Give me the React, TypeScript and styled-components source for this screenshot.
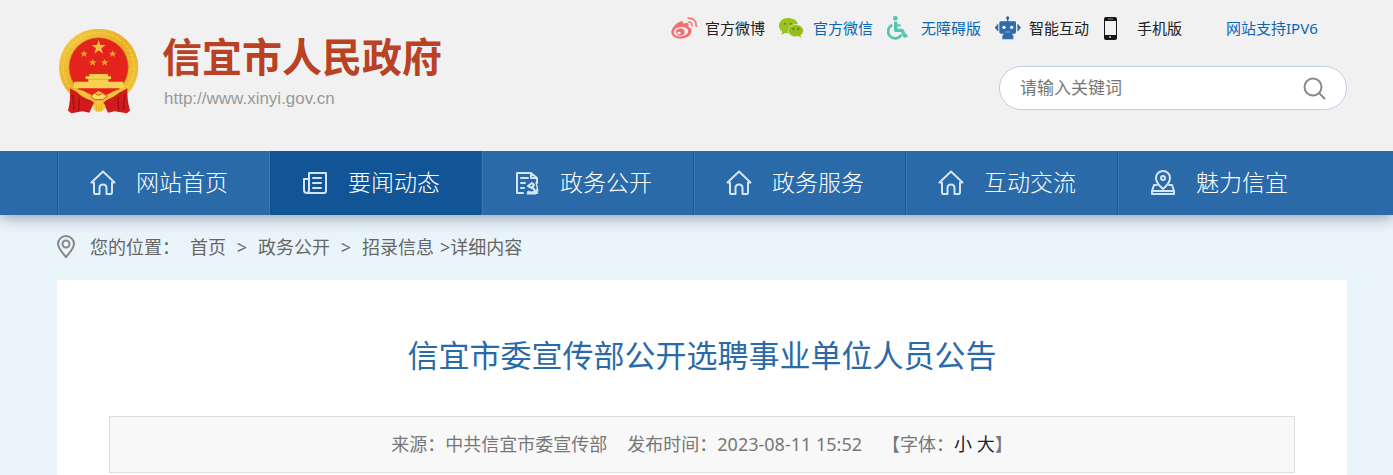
import React from "react";
import styled, { createGlobalStyle } from "styled-components";

const sans = `"Noto Sans", "Noto Sans CJK SC", sans-serif`;

const GlobalStyle = createGlobalStyle`
  * { box-sizing: border-box; }
  body { margin: 0; background: #e9f4fb; color: #333; font-family: ${sans}; }
  a { color: inherit; text-decoration: none; }
  svg { display: block; flex: none; }
`;

const gutter = "padding-left: 57px; padding-right: 46px;";

const Header = styled.header`
  ${gutter}
  display: flex;
  justify-content: space-between;
  height: 151px;
  background: #f1f1f1;
`;

const Brand = styled.a`
  display: flex;
  gap: 23px;
  padding: 29px 0 0 2px;
`;

const BrandText = styled.span`
  display: flex;
  flex-direction: column;
  gap: 6px;
`;

const BrandName = styled.strong`
  font: 700 40px/52px "Noto Sans CJK SC", sans-serif;
  color: #b94124;
  white-space: nowrap;
`;

const BrandUrl = styled.span`
  padding-left: 2px;
  font: 17px/24px "Liberation Sans", sans-serif;
  color: #999;
`;

const Tools = styled.div`
  display: flex;
  flex-direction: column;
  align-items: flex-end;
  gap: 23px;
  padding-top: 13px;
`;

const QuickLinks = styled.nav`
  display: flex;
  width: 676px;
`;

const QuickLink = styled.a<{ $blue?: boolean; $plain?: boolean }>`
  display: flex;
  align-items: center;
  width: 108px;
  height: 30px;
  margin-left: ${(p) => (p.$plain ? 15 : 0)}px;
  font-size: 15px;
  line-height: 30px;
  white-space: nowrap;
  color: ${(p) => (p.$blue ? "#0a66b5" : "#222")};
`;

const IconSlot = styled.span`
  flex: none;
  width: 34px;
`;

const Search = styled.form`
  display: flex;
  align-items: center;
  width: 348px;
  height: 44px;
  padding: 0 20px;
  border: 1px solid #bfcfe6;
  border-radius: 22px;
  background: #fff;
`;

const SearchInput = styled.input`
  flex: 1;
  min-width: 0;
  padding: 0;
  border: 0;
  outline: 0;
  background: none;
  font: 17px/24px ${sans};
  color: #333;
  &::placeholder { color: #757575; opacity: 1; }
`;

const SearchButton = styled.button`
  padding: 0;
  border: 0;
  background: none;
  cursor: pointer;
`;

const MainNav = styled.nav`
  ${gutter}
  position: relative;
  display: flex;
  height: 64px;
  background: #2a6aa8;
  box-shadow: 0 2px 14px rgba(60, 60, 70, 0.5);
  clip-path: inset(0 0 -24px 0);
`;

const NavItem = styled.a<{ $active?: boolean }>`
  display: flex;
  align-items: center;
  gap: 20px;
  width: 212px;
  padding: 0 0 2px 32px;
  border-left: 1px solid ${(p) => (p.$active ? "#3a76b0" : "#1f5c97")};
  box-shadow: ${(p) => (p.$active ? "none" : "inset 1px 0 0 #3a76b0")};
  background: ${(p) => (p.$active ? "#125596" : "transparent")};
  color: #fff;
  font-size: 23px;
  font-weight: 300;
  line-height: 32px;
  white-space: nowrap;
`;

const Crumbs = styled.nav`
  ${gutter}
  display: flex;
  align-items: center;
  height: 65px;
  padding-bottom: 2px;
  font-size: 18px;
  line-height: 28px;
  color: #666;
  white-space: nowrap;
`;

const CrumbLabel = styled.span`
  margin: 0 10px 0 15px;
`;

const CrumbSep = styled.span`
  width: 32px;
  text-align: center;
`;

const CrumbTail = styled.span`
  padding-left: 6px;
`;

const Article = styled.main`
  margin: 0 46px 0 57px;
  padding: 51px 52px 60px;
  background: #fff;
`;

const Title = styled.h1`
  margin: 0 0 37px;
  font-size: 31px;
  font-weight: 400;
  line-height: 48px;
  text-align: center;
  color: #2a6aa8;
`;

const Meta = styled.div`
  display: flex;
  justify-content: center;
  gap: 20px;
  padding: 14px 0;
  border: 1px solid #ddd;
  background: #f8f8f8;
  font-size: 18px;
  line-height: 27px;
  color: #777;
  white-space: nowrap;
`;

const SizeButton = styled.button`
  padding: 0;
  border: 0;
  background: none;
  font: inherit;
  color: #222;
  cursor: pointer;
`;

const Emblem = () => (
  <svg width="80" height="85" viewBox="27 27 240 255" aria-hidden="true">
    <defs>
      <linearGradient id="gold" x1="0" y1="0" x2="1" y2="1">
        <stop offset="0" stopColor="#f7cf45" />
        <stop offset="0.5" stopColor="#e9ae27" />
        <stop offset="1" stopColor="#f5ca3c" />
      </linearGradient>
    </defs>
    <ellipse cx="146" cy="142" rx="119" ry="116" fill="url(#gold)" />
    <ellipse cx="146" cy="142" rx="106" ry="104" fill="none" stroke="#f4cd48" strokeWidth="4" strokeDasharray="9 5" />
    <circle cx="146" cy="142" r="89" fill="#e4231d" stroke="#c98a1a" strokeWidth="2" />
    <path d="M146 60l5 15h16l-13 10 5 16-13-10-13 10 5-16-13-10h16z" fill="#f3c53a" />
    <path
      d="M102 91l3 7h8l-6 5 2 8-7-5-7 5 2-8-6-5h8zM188 91l3 7h8l-6 5 2 8-7-5-7 5 2-8-6-5h8zM128 117l3 7h8l-6 5 2 8-7-5-7 5 2-8-6-5h8zM164 117l3 7h8l-6 5 2 8-7-5-7 5 2-8-6-5h8z"
      fill="#eda62c"
    />
    <path d="M118 162h56v7h9v8h-8v8h44l4 20H69l4-20h42v-8h-8v-8h11z" fill="#f8d152" />
    <path d="M113 178h66" stroke="#e0a02a" strokeWidth="2" />
    <path d="M79 207h134l-19 20H99z" fill="#e4231d" />
    <path d="M60 205q20 14 44 19l28 24-14 30-20-4-34 6-10-8q8-30 6-67z" fill="#d01b1b" />
    <path d="M232 205q-20 14-44 19l-28 24 14 30 20-4 36 6 10-8q-9-30-8-67z" fill="#d01b1b" />
    <path d="M68 224l4 46M88 232l-2 40M224 224l-4 46M204 232l2 40" stroke="#a31014" strokeWidth="4" />
    <path d="M74 205q28 6 50 20l22-12 24 12q22-14 48-20-12 20-42 32l-28 8h-10l-26-8q-30-12-38-32z" fill="#f2c23a" />
    <path d="M122 229l12-9 12 6 12-6 14 9-14 10h-24z" fill="#f9dc62" stroke="#d7541f" strokeWidth="3" />
    <path d="M127 257l9-9 11-3 11 3 9 9-5 12-8 6h-15l-8-7z" fill="#f6cc38" />
    <path d="M138 250l3 22M147 248v26M156 250l-3 22" stroke="#dc9724" strokeWidth="2" />
  </svg>
);

const WeiboIcon = () => (
  <svg width="27" height="23" viewBox="17 19 81 69" aria-hidden="true">
    <path
      d="M44 33c6-3 11-1 10 6 8-3 17-3 16 5 0 2-1 3-1 4 6 2 10 6 10 12 0 13-15 24-34 24-16 0-27-8-27-20 0-11 13-26 26-31z"
      fill="#ee7272"
    />
    <ellipse cx="47" cy="63" rx="22" ry="14" fill="#f8eeee" transform="rotate(-8 47 63)" />
    <ellipse cx="45" cy="64" rx="13" ry="11" fill="#ee7272" transform="rotate(-15 45 64)" />
    <ellipse cx="41" cy="67" rx="5" ry="4" fill="#fff" />
    <path d="M69 34q12-1 11 12" fill="none" stroke="#f08080" strokeWidth="5" strokeLinecap="round" />
    <path d="M69 23q24-1 24 24" fill="none" stroke="#f08080" strokeWidth="6" strokeLinecap="round" />
  </svg>
);

const WechatIcon = () => (
  <svg width="25" height="20" viewBox="357 41 75 60" aria-hidden="true">
    <path d="M384 41c-16 0-27 10-27 23 0 8 4 14 10 18l-3 10 11-6q5 1 12 1c-4-17 9-29 27-28-3-11-15-18-30-18z" fill="#9ac31c" />
    <path d="M407 61c-13 0-22 8-22 18s9 18 22 18l8-1 10 5-3-9c5-3 8-8 8-13 0-10-10-18-23-18z" fill="#93be17" stroke="#dfeabb" strokeWidth="2" />
    <g fill="#5d7b14">
      <circle cx="375" cy="58" r="3" />
      <circle cx="392" cy="58" r="3" />
      <circle cx="400" cy="74" r="3" />
      <circle cx="415" cy="74" r="3" />
    </g>
  </svg>
);

const AccessIcon = () => (
  <svg width="21" height="24" viewBox="682 35 63 72" fill="none" stroke="#58c3b0" aria-hidden="true">
    <circle cx="707" cy="42" r="7" fill="#58c3b0" stroke="none" />
    <path d="M708 52v26h19l8 17 8-2" strokeWidth="10" strokeLinejoin="round" />
    <path d="M708 63h15" strokeWidth="6" />
    <path d="M698 62a21 21 0 1 0 27 29" strokeWidth="8" />
  </svg>
);

const RobotIcon = () => (
  <svg width="26" height="24" viewBox="19 35 78 72" fill="#2e6cab" aria-hidden="true">
    <circle cx="57" cy="41" r="5" />
    <path d="M55 44h4v8h-4zM36 51h42q4 0 4 4v28q0 5-5 5h-6v5h3v12H41V93h3v-5h-7q-5 0-5-5V55q0-4 4-4z" />
    <path d="M29 59v22q-5 0-6-6-4-1-4-5t4-5q1-6 6-6zM86 59v22q5 0 6-6 4-1 4-5t-4-5q-1-6-6-6z" />
    <circle cx="46" cy="69" r="5" fill="#fff" />
    <circle cx="69" cy="69" r="5" fill="#fff" />
    <path d="M50 83h15" stroke="#b7cde4" strokeWidth="2" />
  </svg>
);

const PhoneIcon = () => (
  <svg width="15" height="23" viewBox="-1 0 15 23" aria-hidden="true">
    <rect width="13" height="23" rx="2" fill="#151515" />
    <path d="M1 4h11v14H1z" fill="#f1f1f1" />
    <path d="M4 2h5" stroke="#888" />
    <circle cx="6" cy="20" r="1" fill="#ccc" />
  </svg>
);

const SearchIcon = () => (
  <svg width="24" height="24" viewBox="0 0 24 24" fill="none" stroke="#8a8a8a" strokeWidth="2" aria-hidden="true">
    <circle cx="11" cy="11" r="8.500" />
    <path d="M17 17l6 6" />
  </svg>
);

const navIcon = {
  width: 26,
  height: 26,
  viewBox: "0 0 26 26",
  fill: "none",
  stroke: "#d5e4f4",
  strokeWidth: 2,
  strokeLinejoin: "round" as const,
  strokeLinecap: "round" as const,
  "aria-hidden": true,
};

const HomeIcon = () => (
  <svg {...navIcon}>
    <path d="M1.500 13.500L13 2.500l11.500 11H22V23q0 2-1 2h-4.500v-6q0-3.500-3.500-3.500T9.500 19v6H5q-1 0-1-2v-9.500z" />
  </svg>
);

const NewsIcon = () => (
  <svg {...navIcon}>
    <path d="M7 4h17v18q0 2-2 2H5q-3 0-3-3V10h5M7 4v17q0 3-2 3M11 9h8M11 14h8M11 19h8" />
  </svg>
);

const DocIcon = () => (
  <svg {...navIcon}>
    <path d="M9 24H3V4h14l6 5v5M17 4v5h6M7 9h7M7 14h4M7 19h3" />
    <path d="M14 17l4-3 2 2-2 3-2-1zM18 18l5 6" strokeWidth="2" />
    <path d="M22 14q3 6-1 8-4 2-7 0l-1 3h9l2-3z" fill="#d5e4f4" strokeWidth="1" />
  </svg>
);

const CharmIcon = () => (
  <svg {...navIcon}>
    <path d="M13 20Q6 14 6 9a7 7 0 0 1 14 0q0 5-7 11z" />
    <circle cx="13" cy="9" r="2" />
    <path d="M7 16H4l-2 6v3h22v-3l-2-6h-3M3 22h20" />
  </svg>
);

const PlaceIcon = () => (
  <svg width="18" height="24" viewBox="0 0 18 24" fill="none" stroke="#888" strokeWidth="2" aria-hidden="true">
    <path d="M9 22Q1 13 1 9a8 8 0 0 1 16 0q0 4-8 13z" />
    <circle cx="9" cy="9" r="3.500" />
  </svg>
);

const quickLinks = [
  { text: "官方微博", icon: <WeiboIcon /> },
  { text: "官方微信", icon: <WechatIcon />, blue: true },
  { text: "无障碍版", icon: <AccessIcon />, blue: true },
  { text: "智能互动", icon: <RobotIcon /> },
  { text: "手机版", icon: <PhoneIcon /> },
];

const navItems = [
  { text: "网站首页", Icon: HomeIcon },
  { text: "要闻动态", Icon: NewsIcon, active: true },
  { text: "政务公开", Icon: DocIcon },
  { text: "政务服务", Icon: HomeIcon },
  { text: "互动交流", Icon: HomeIcon },
  { text: "魅力信宜", Icon: CharmIcon },
];

export default function App() {
  return (
    <>
      <GlobalStyle />
      <Header>
        <Brand href="#">
          <Emblem />
          <BrandText>
            <BrandName>信宜市人民政府</BrandName>
            <BrandUrl>http://www.xinyi.gov.cn</BrandUrl>
          </BrandText>
        </Brand>
        <Tools>
          <QuickLinks>
            {quickLinks.map((l) => (
              <QuickLink key={l.text} href="#" $blue={l.blue}>
                <IconSlot>{l.icon}</IconSlot>
                {l.text}
              </QuickLink>
            ))}
            <QuickLink href="#" $blue $plain>网站支持IPV6</QuickLink>
          </QuickLinks>
          <Search onSubmit={(e) => e.preventDefault()}>
            <SearchInput type="text" placeholder="请输入关键词" aria-label="请输入关键词" />
            <SearchButton type="submit" aria-label="搜索">
              <SearchIcon />
            </SearchButton>
          </Search>
        </Tools>
      </Header>
      <MainNav>
        {navItems.map(({ text, Icon, active }) => (
          <NavItem key={text} href="#" $active={active}>
            <Icon />
            {text}
          </NavItem>
        ))}
      </MainNav>
      <Crumbs>
        <PlaceIcon />
        <CrumbLabel>您的位置：</CrumbLabel>
        <a href="#">首页</a>
        <CrumbSep>&gt;</CrumbSep>
        <a href="#">政务公开</a>
        <CrumbSep>&gt;</CrumbSep>
        <a href="#">招录信息</a>
        <CrumbTail>&gt;详细内容</CrumbTail>
      </Crumbs>
      <Article>
        <Title>信宜市委宣传部公开选聘事业单位人员公告</Title>
        <Meta>
          <span>来源：中共信宜市委宣传部</span>
          <span>发布时间：2023-08-11 15:52</span>
          <span>
            【字体：<SizeButton type="button">小</SizeButton> <SizeButton type="button">大</SizeButton>】
          </span>
        </Meta>
      </Article>
    </>
  );
}
